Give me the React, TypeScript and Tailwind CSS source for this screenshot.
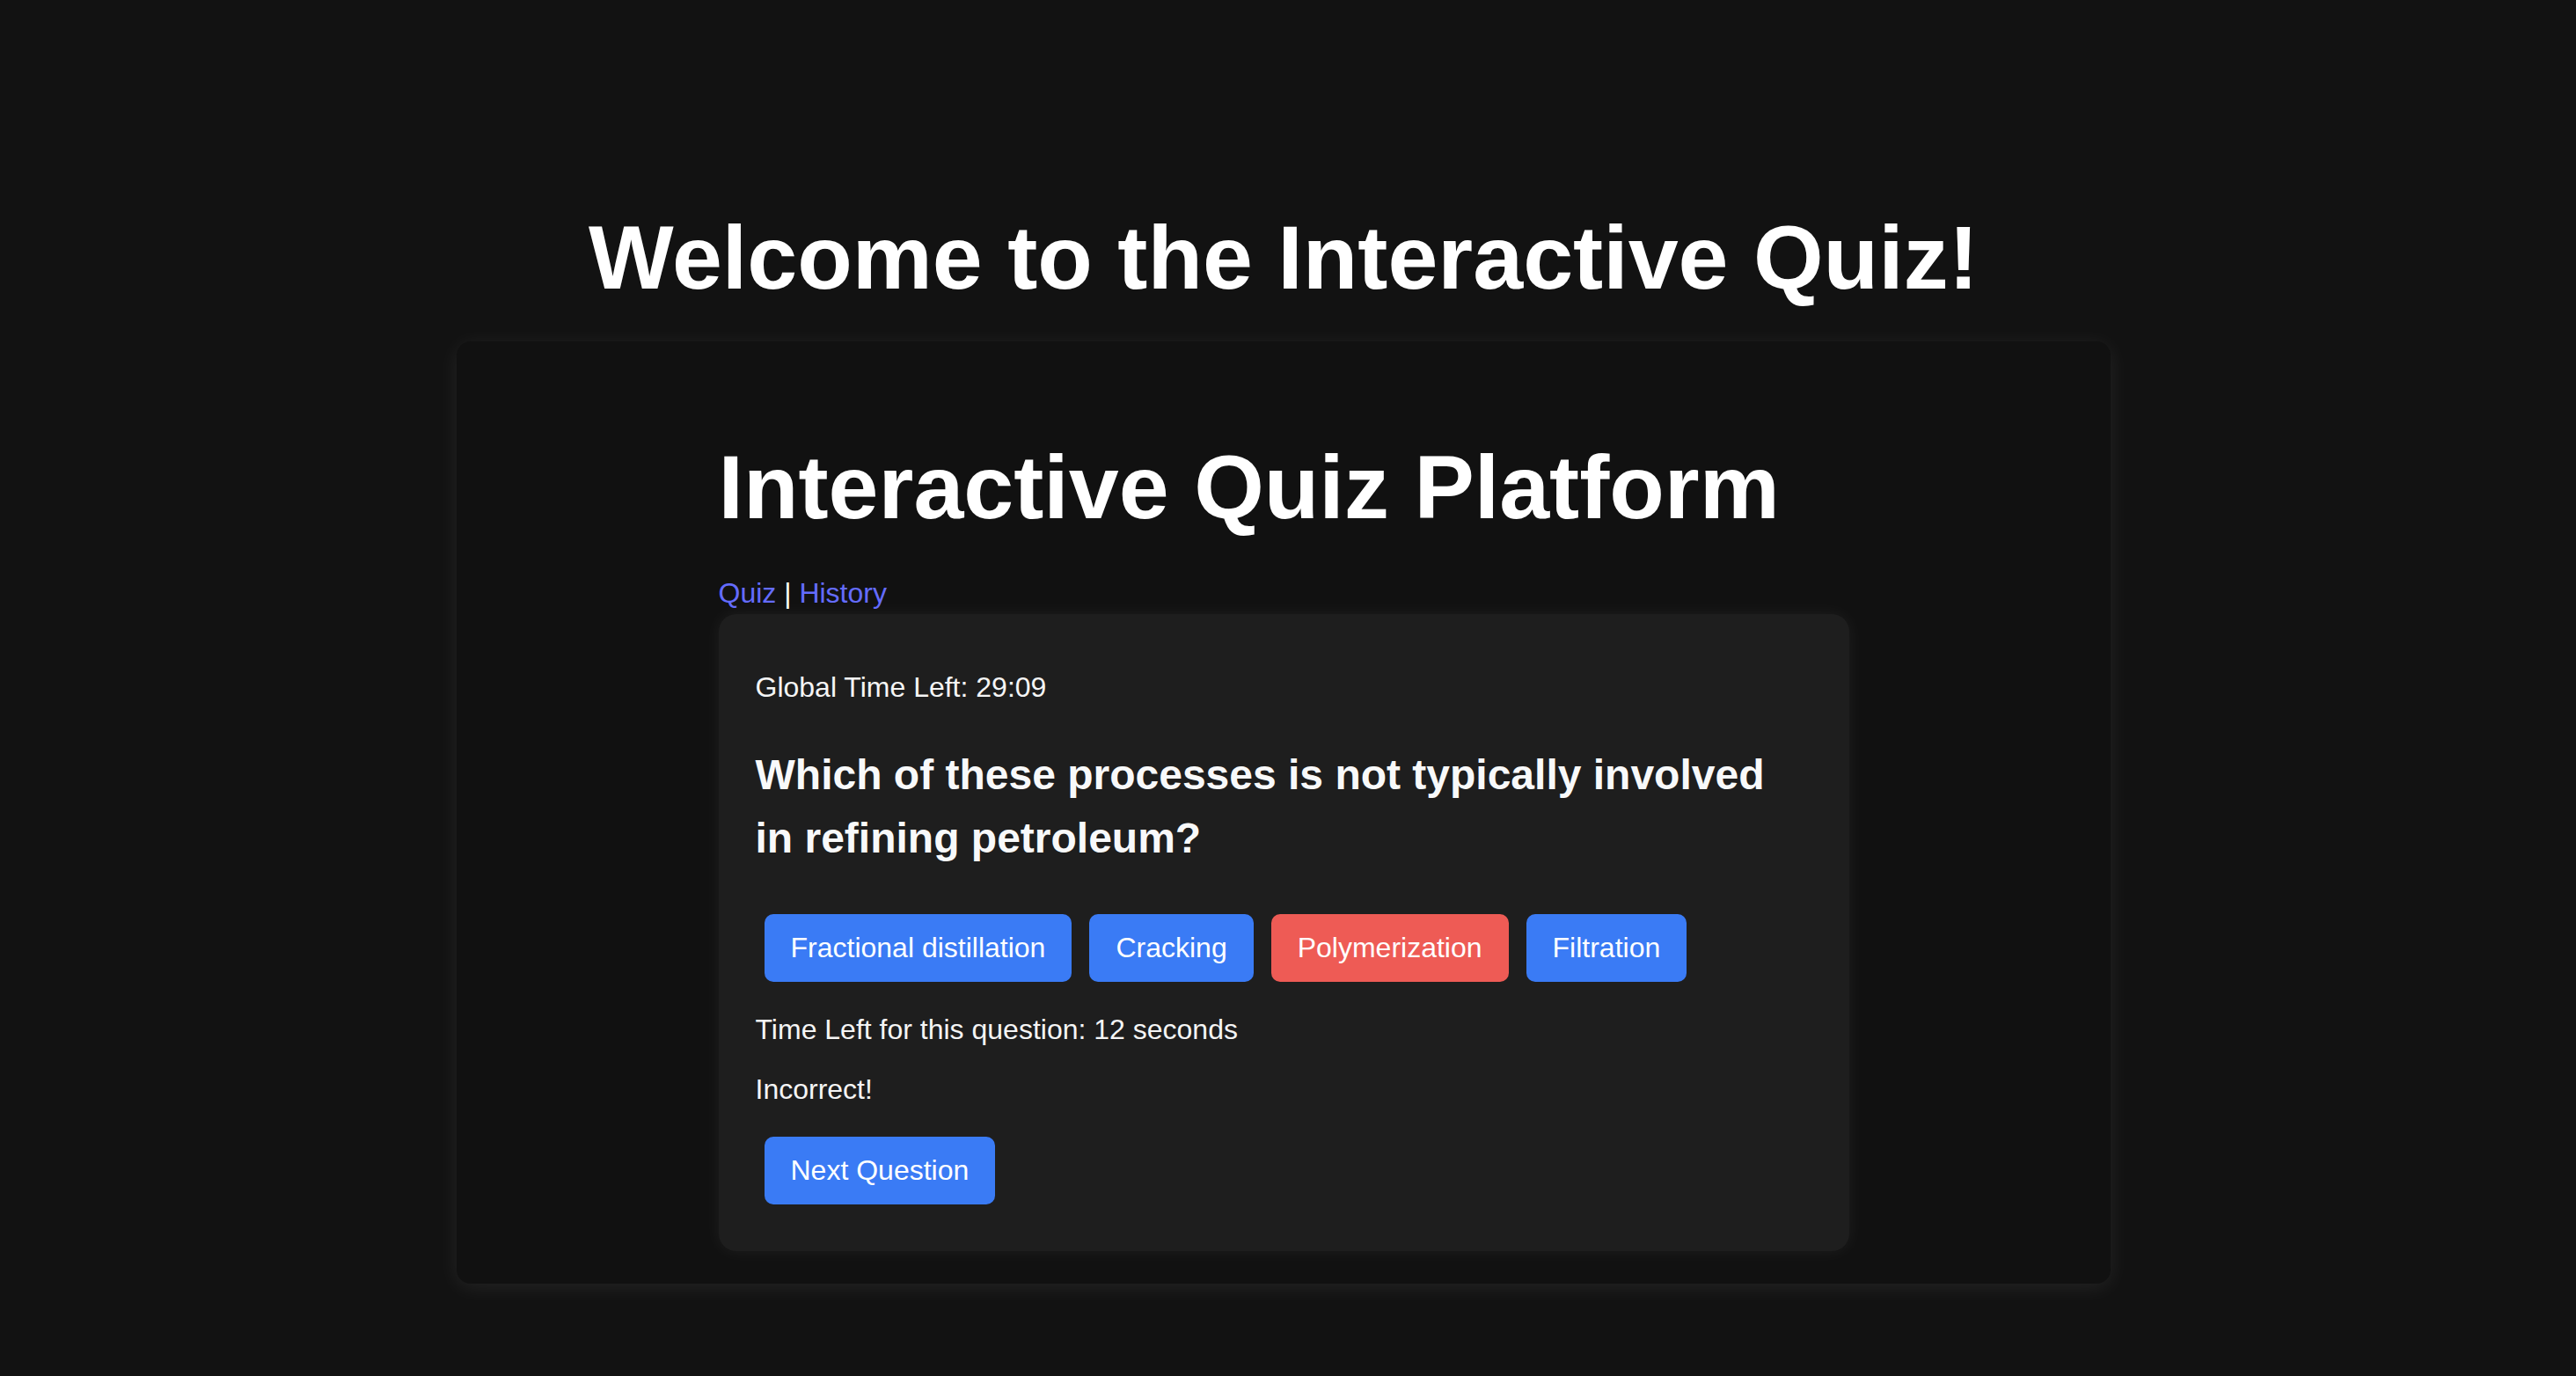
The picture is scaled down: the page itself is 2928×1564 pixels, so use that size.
import React from "react";

export default function App() {
  const font = { fontFamily: '"Liberation Sans", Arial, Helvetica, sans-serif' };
  const answers = [
    { label: "Fractional distillation", red: false },
    { label: "Cracking", red: false },
    { label: "Polymerization", red: true },
    { label: "Filtration", red: false },
  ];
  return (
    <div
      className="min-h-screen w-full bg-[#121212] text-white pr-[10px] pt-[237px] pb-[100px] flex flex-col items-center"
      style={font}
    >
      <h1 className="text-[102.4px] leading-[1.1] font-bold text-white mb-[38px]">
        Welcome to the Interactive Quiz!
      </h1>
      <div className="w-[1880px] bg-[#111111] rounded-[16px] shadow-[0_4px_24px_rgba(255,255,255,0.08)] pt-[110px] pb-[37px]">
        <div className="w-[1285px] mx-auto">
          <h1 className="text-[102.4px] leading-[1.1] font-bold text-white">
            Interactive Quiz Platform
          </h1>
          <nav className="mt-[40px] text-[32px] leading-[48px]">
            <a className="text-[#646cff] cursor-pointer">Quiz</a>
            <span className="text-white"> | </span>
            <a className="text-[#646cff] cursor-pointer">History</a>
          </nav>
          <div className="bg-[#1e1e1e] rounded-[20px] shadow-[0_0_20px_rgba(255,255,255,0.06)] px-[42px] pt-[59px] pb-[43px]">
            <p className="text-[32px] leading-[48px] text-[#f5f5f5]">Global Time Left: 29:09</p>
            <h2 className="mt-[40px] max-w-[1170px] text-[48px] leading-[72px] font-bold text-[#f8f9fa]">
              Which of these processes is not typically involved in refining petroleum?
            </h2>
            <div className="mt-[40px] flex flex-wrap">
              {answers.map((a) => (
                <button
                  key={a.label}
                  className={
                    "m-[10px] px-[30px] py-[20px] text-[32px] leading-[normal] text-white rounded-[10px] " +
                    (a.red ? "bg-[#ee5b55]" : "bg-[#3a7bf5]")
                  }
                >
                  {a.label}
                </button>
              ))}
            </div>
            <p className="mt-[20px] text-[32px] leading-[48px] text-[#f5f5f5]">
              Time Left for this question: 12 seconds
            </p>
            <p className="mt-[20px] text-[32px] leading-[48px] text-[#f5f5f5]">Incorrect!</p>
            <div className="mt-[20px] flex">
              <button className="m-[10px] px-[30px] py-[20px] text-[32px] leading-[normal] text-white rounded-[10px] bg-[#3a7bf5]">
                Next Question
              </button>
            </div>
          </div>
        </div>
      </div>
    </div>
  );
}
